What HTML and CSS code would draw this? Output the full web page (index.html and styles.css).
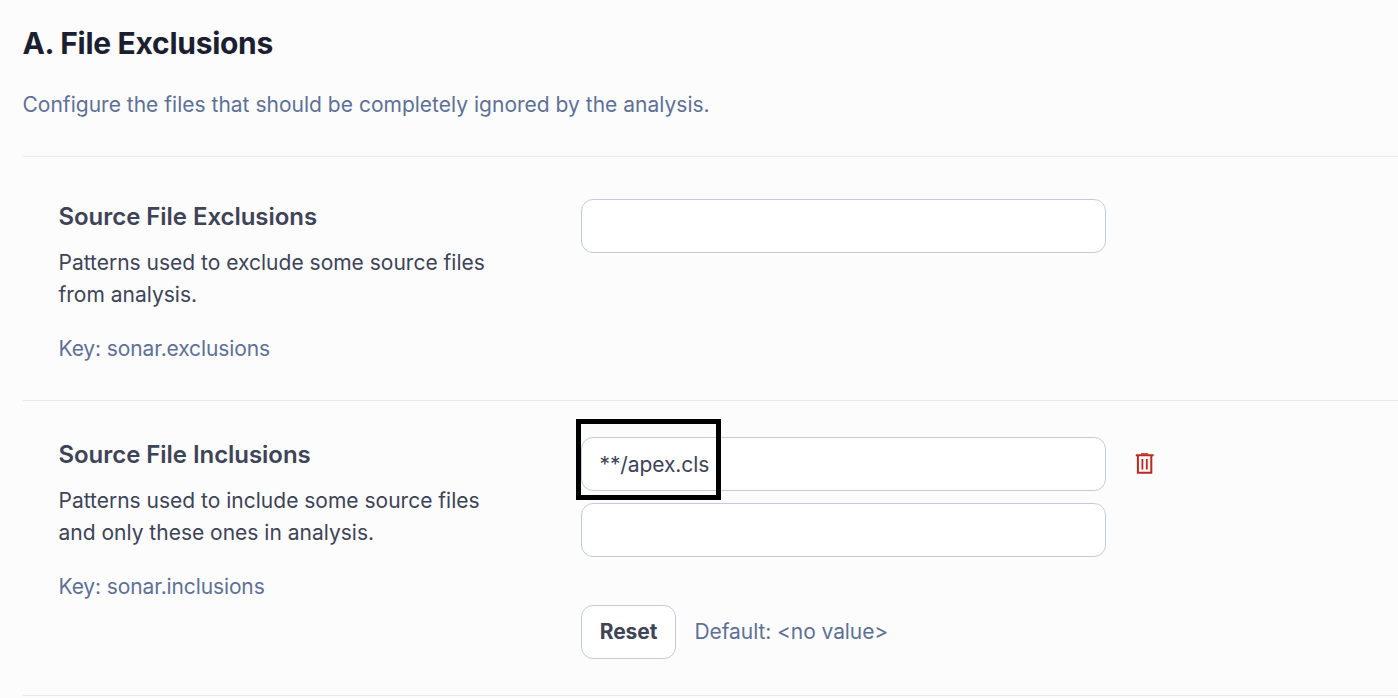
FILE: index.html
```html
<!DOCTYPE html>
<html lang="en">
<head>
<meta charset="utf-8">
<title>File Exclusions</title>
<link rel="stylesheet" href="styles.css">
</head>
<body>
<main class="settings">
  <header class="intro">
    <h2 class="title">A. File Exclusions</h2>
    <p class="lead">Configure the files that should be completely ignored by the analysis.</p>
  </header>
  <section class="setting first">
    <div class="info">
      <h3 class="name">Source File Exclusions</h3>
      <p class="desc">Patterns used to exclude some source files<br>from analysis.</p>
      <p class="key">Key: sonar.exclusions</p>
    </div>
    <div class="controls">
      <div class="row"><div class="field"></div></div>
    </div>
  </section>
  <section class="setting second">
    <div class="info">
      <h3 class="name">Source File Inclusions</h3>
      <p class="desc">Patterns used to include some source files<br>and only these ones in analysis.</p>
      <p class="key">Key: sonar.inclusions</p>
    </div>
    <div class="controls">
      <div class="row">
        <div class="field"><span class="value">**/apex.cls</span><span class="highlight"></span></div>
        <svg class="trash" viewBox="0 0 20 22" width="20" height="22" fill="none" stroke="#c0271c"><path stroke-width="2" d="M.8 2.2H18.6M2.9 2.2V19.8H16.3V2.2"/><path stroke-width="1.2" d="M6 .8H13.2"/><path stroke-width="1.8" d="M7.4 6V16.6M11.8 6V16.6"/></svg>
      </div>
      <div class="row"><div class="field"></div></div>
      <div class="actions">
        <button class="reset">Reset</button>
        <span class="default">Default: &lt;no value&gt;</span>
      </div>
    </div>
  </section>
</main>
</body>
</html>
```
FILE: styles.css
```css
* { box-sizing: border-box; }
body { margin: 0; height: 698px; overflow: hidden; background: #fcfcfd; font-family: Inter, sans-serif; font-size: 21px; line-height: 32px; color: #3e4357; }
h2, h3, p { margin: 0; }
.settings { padding-left: 22.5px; }
.intro { height: 156px; padding-top: 23px; }
.title { font-size: 30px; line-height: 40px; font-weight: 700; color: #1b1f30; letter-spacing: -0.29px; }
.lead { margin-top: 26px; color: #5f7096; letter-spacing: 0.01px; }
.setting { display: flex; border-top: 1px solid #e8eaed; padding: 42px 0 0 36px; }
.first { height: 244px; }
.second { height: 296px; padding-top: 36px; border-bottom: 1px solid #e8eaed; }
.info { width: 522.5px; }
.name { font-size: 24px; font-weight: 600; line-height: 34px; margin-top: 1px; letter-spacing: -0.05px; }
.desc { margin-top: 13px; }
.key { margin-top: 22px; color: #5f7096; letter-spacing: -0.12px; }
.controls { display: flex; flex-direction: column; gap: 12px; }
.row { display: flex; align-items: center; }
.field { position: relative; width: 525px; height: 54px; border: 1px solid #c3cbe0; border-radius: 12px; background: #fff; padding: 11px 17.5px; letter-spacing: -0.1px; }
.highlight { position: absolute; left: -6px; top: -19px; width: 145px; height: 81px; border: 5px solid #000; }
.trash { margin-left: 29px; }
.actions { display: flex; align-items: center; gap: 18.5px; margin-top: 36px; }
.reset { width: 95px; height: 54px; padding: 0 0 2px; border: 1px solid #c3cbe0; border-radius: 12px; background: #fff; font: 700 21px Inter, sans-serif; letter-spacing: -0.1px; color: #3e4357; }
.default { color: #5f7096; letter-spacing: -0.08px; }
```
